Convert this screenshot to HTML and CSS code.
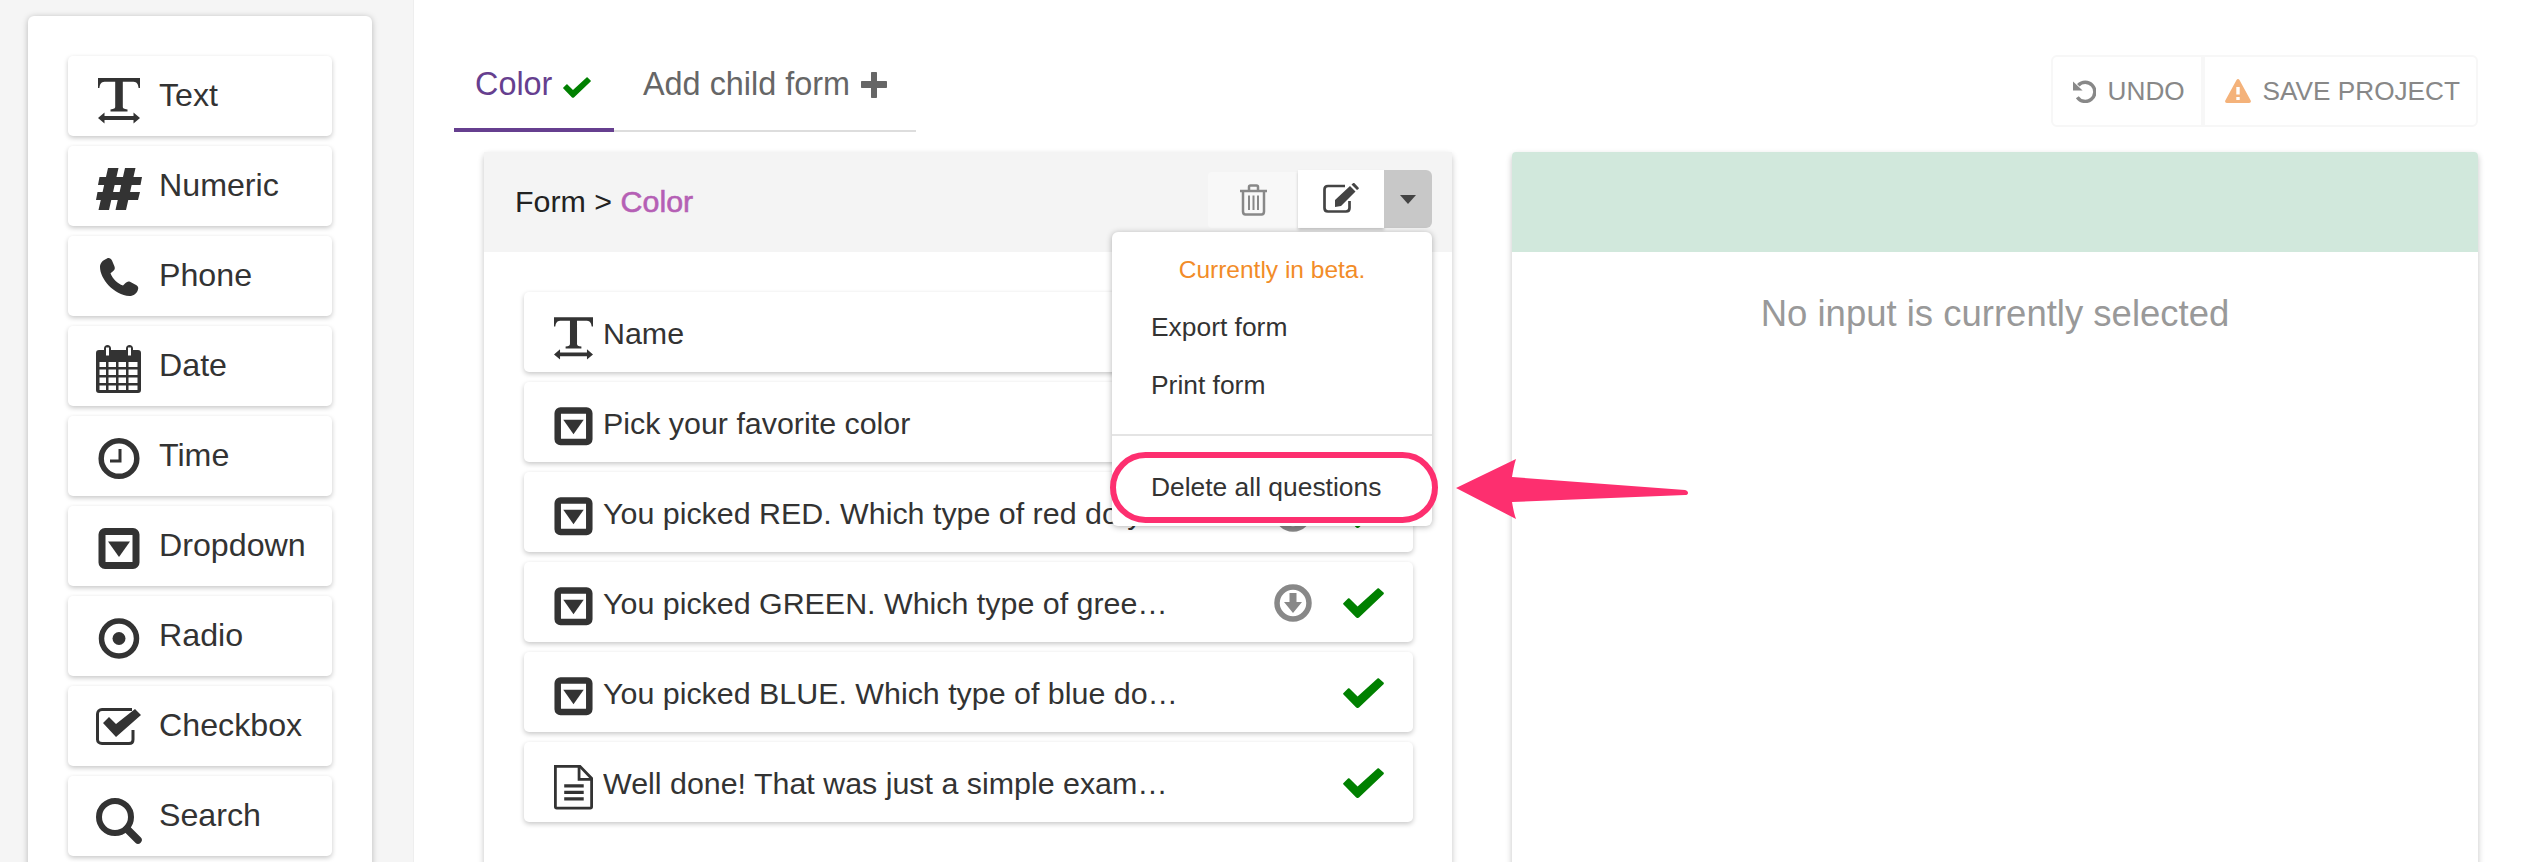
FILE: index.html
```html
<!DOCTYPE html>
<html lang="en">
<head>
    <meta charset="UTF-8">
    <title>Form builder</title>
    <link rel="stylesheet" href="styles.css">
</head>
<body>
    <svg class="sprite" xmlns="http://www.w3.org/2000/svg">
        <symbol id="i-text" viewBox="0 0 46 56">
            <path d="M2 10H44V20H42.6C42 16 41 14.2 37.500 13.800H26.800V38.500C26.800 40.500 28 41 31.500 41.500V43.500H14.500V41.500C18 41 19.200 40.500 19.200 38.500V13.800H8.500C5 14.200 4 16 3.400 20H2Z"/>
            <path d="M2 50L8.500 44.500V48H37.500V44.500L44 50L37.500 55.500V52H8.500V55.500Z"/>
        </symbol>
        <symbol id="i-hash" viewBox="0 0 46 56">
            <path d="M12 10H22.500L13 52H2.500ZM29 10H39.500L30 52H19.500Z"/>
            <path d="M3.500 19H46L44.500 27H2ZM1.500 34H44L42 42H0Z"/>
        </symbol>
        <symbol id="i-phone" viewBox="0 0 46 56">
            <path d="M11 10.500C13 9.500 15 10.500 16 12.500L18.500 18.500C19.300 20.500 18.500 22 17 23.300L14.500 25.200C16.500 30.500 21.500 35.500 27 37.500L29.500 35C31 33.500 32.500 33 34 33.800L40.500 37.200C42.300 38.200 42.500 40 42 41.500C41 45.500 37.500 48 33.500 48C18 47 4 31 4 19C4 15 7 12 11 10.500Z"/>
        </symbol>
        <symbol id="i-calendar" viewBox="0 0 46 56">
            <path fill-rule="evenodd" d="M3 12H8V10.500C8 8.500 9.500 7 11.500 7S15 8.500 15 10.500V12H30V10.500C30 8.500 31.500 7 33.500 7S37 8.500 37 10.500V12H42C44 12 45 13 45 15V52C45 54 44 55 42 55H3C1 55 0 54 0 52V15C0 13 1 12 3 12ZM10 9.500V17.500H13V9.500ZM32 9.500V17.500H35V9.500ZM3.500 24V29H10V24ZM12.500 24V29H20V24ZM22.500 24V29H30V24ZM32.500 24V29H41.500V24ZM3.500 31.500V37H10V31.500ZM12.500 31.500V37H20V31.500ZM22.500 31.500V37H30V31.500ZM32.500 31.500V37H41.500V31.500ZM3.500 39.500V45H10V39.500ZM12.500 39.500V45H20V39.500ZM22.500 39.500V45H30V39.500ZM32.500 39.500V45H41.500V39.500ZM3.500 47.500V52H10V47.500ZM12.500 47.500V52H20V47.500ZM22.500 47.500V52H30V47.500ZM32.500 47.500V52H41.500V47.500Z"/>
        </symbol>
        <symbol id="i-clock" viewBox="0 0 46 56">
            <circle cx="23" cy="30.500" r="17.800" fill="none" stroke="currentColor" stroke-width="5.500"/>
            <path d="M24 21V33H14" fill="none" stroke="currentColor" stroke-width="3"/>
        </symbol>
        <symbol id="i-dropdown" viewBox="0 0 46 56">
            <rect x="6" y="13.500" width="34" height="34" rx="3" fill="none" stroke="currentColor" stroke-width="7"/>
            <path d="M12 23.500H34L23 39Z"/>
        </symbol>
        <symbol id="i-radio" viewBox="0 0 46 56">
            <circle cx="23" cy="30.500" r="17.500" fill="none" stroke="currentColor" stroke-width="5.500"/>
            <circle cx="23" cy="30.500" r="6.500"/>
        </symbol>
        <symbol id="i-checkbox" viewBox="0 0 46 56">
            <path d="M36 11.500H6C3.500 11.500 1.500 13.500 1.500 16V41.500C1.500 44 3.500 45.500 6 45.500H33C35.500 45.500 37 44 37 41.500V32" fill="none" stroke="currentColor" stroke-width="3"/>
            <path d="M7 25L13 19L20 26L39 11L45 17L20 39Z"/>
        </symbol>
        <symbol id="i-search" viewBox="0 0 46 56">
            <circle cx="19" cy="29" r="16" fill="none" stroke="currentColor" stroke-width="6"/>
            <path d="M31 41L42 52" fill="none" stroke="currentColor" stroke-width="7.500" stroke-linecap="round"/>
        </symbol>
        <symbol id="i-file" viewBox="0 0 46 56">
            <path d="M3.500 9H30L42.500 22V52.500C42.500 53.500 42 54 41 54H5C4 54 3.500 53.500 3.500 52.500Z" fill="none" stroke="currentColor" stroke-width="3"/>
            <path d="M29 9V23H43" fill="none" stroke="currentColor" stroke-width="3"/>
            <path d="M13 30H34M13 37H34M13 44H34" fill="none" stroke="currentColor" stroke-width="3.500"/>
        </symbol>
        <symbol id="i-check" viewBox="0 0 41 30">
            <path d="M0.500 16.500C0 16 0 15.400 0.500 15L5 10.600C5.500 10 6 10 6.500 10.600L14.600 18.600L34.500 0.500C35 0 35.500 0 36 0.500L40.500 4.600C41 5 41 5.600 40.500 6.200L16 29.500C15.300 30.200 14 30.200 13.200 29.500Z"/>
        </symbol>
        <symbol id="i-plus" viewBox="0 0 26 26">
            <path d="M10 1C10 .4 10.400 0 11 0H15C15.600 0 16 .4 16 1V9H25C25.600 9 26 9.400 26 10V15C26 15.600 25.600 16 25 16H16V25C16 25.600 15.600 26 15 26H11C10.400 26 10 25.600 10 25V16H1C.4 16 0 15.600 0 15V10C0 9.400 .4 9 1 9H10Z"/>
        </symbol>
        <symbol id="i-down" viewBox="0 0 38 38">
            <circle cx="19" cy="19" r="16" fill="none" stroke="currentColor" stroke-width="5.500"/>
            <path d="M15.500 9H22.500V18H28L19 29L10 18H15.500Z"/>
        </symbol>
        <symbol id="i-trash" viewBox="0 0 29 32">
            <path d="M1 7H28M10 7V3C10 2 10.800 1.500 11.500 1.500H17.500C18.200 1.500 19 2 19 3V7M4 7V27.500C4 29.500 5 30.500 6.500 30.500H22.500C24 30.500 25 29.500 25 27.500V7" fill="none" stroke="currentColor" stroke-width="2.500"/>
            <path d="M10 11.500V26M14.500 11.500V26M19 11.500V26" fill="none" stroke="currentColor" stroke-width="2"/>
        </symbol>
        <symbol id="i-edit" viewBox="0 0 36 30">
            <path d="M22 3H5C2.800 3 1.500 4.300 1.500 6.500V25C1.500 27.200 2.800 28.500 5 28.500H23C25.200 28.500 26.500 27.200 26.500 25V18" fill="none" stroke="currentColor" stroke-width="2.700"/>
            <path d="M12 17L27 3L32.500 8.500L18 23L12 24ZM28.500 1.500L30 .3C30.500 0 31 0 31.500 .3L35.500 4.500C36 5 36 5.500 35.500 6L34 7Z"/>
        </symbol>
        <symbol id="i-undo" viewBox="0 0 24 24">
            <path d="M5.500 5.500A10 10 0 1 1 4.500 18" fill="none" stroke="currentColor" stroke-width="3.600"/>
            <path d="M0 1.500L10 11H0Z"/>
        </symbol>
        <symbol id="i-warn" viewBox="0 0 26 24">
            <path fill-rule="evenodd" d="M11.500 1C12.300 -.2 13.700 -.2 14.500 1L25.700 21.500C26.300 22.800 25.500 24 24.200 24H1.800C.5 24 -.3 22.800 .3 21.500ZM11.300 8V15.500H14.700V8ZM11.300 18V21H14.700V18Z"/>
        </symbol>
    </svg>

    <div class="app">
        <aside class="sidebar">
            <div class="tool-card">
                <div class="tool"><svg class="tool-icon"><use href="#i-text"/></svg><span>Text</span></div>
                <div class="tool"><svg class="tool-icon"><use href="#i-hash"/></svg><span>Numeric</span></div>
                <div class="tool"><svg class="tool-icon"><use href="#i-phone"/></svg><span>Phone</span></div>
                <div class="tool"><svg class="tool-icon"><use href="#i-calendar"/></svg><span>Date</span></div>
                <div class="tool"><svg class="tool-icon"><use href="#i-clock"/></svg><span>Time</span></div>
                <div class="tool"><svg class="tool-icon"><use href="#i-dropdown"/></svg><span>Dropdown</span></div>
                <div class="tool"><svg class="tool-icon"><use href="#i-radio"/></svg><span>Radio</span></div>
                <div class="tool"><svg class="tool-icon"><use href="#i-checkbox"/></svg><span>Checkbox</span></div>
                <div class="tool"><svg class="tool-icon"><use href="#i-search"/></svg><span>Search</span></div>
            </div>
        </aside>

        <main class="content">
            <div class="topbar">
                <div class="tabs">
                    <div class="tab tab-active">Color <svg class="tab-check"><use href="#i-check"/></svg></div>
                    <div class="tab tab-add">Add child form <svg class="tab-plus"><use href="#i-plus"/></svg></div>
                </div>
                <div class="actions">
                    <div class="action action-undo"><svg class="undo-icon"><use href="#i-undo"/></svg>UNDO</div>
                    <div class="action action-save"><svg class="warn-icon"><use href="#i-warn"/></svg>SAVE PROJECT</div>
                </div>
            </div>

            <div class="panels">
                <section class="panel panel-form">
                    <div class="form-head">
                        <div class="crumb">Form &gt; <span class="crumb-name">Color</span></div>
                        <div class="head-buttons">
                            <div class="btn-trash"><svg class="trash-icon"><use href="#i-trash"/></svg></div>
                            <div class="btn-edit"><svg class="edit-icon"><use href="#i-edit"/></svg></div>
                            <div class="btn-caret"><span class="caret"></span></div>
                        </div>
                        <div class="menu">
                            <div class="menu-note">Currently in beta.</div>
                            <div class="menu-item">Export form</div>
                            <div class="menu-item">Print form</div>
                            <div class="menu-line"></div>
                            <div class="menu-item">Delete all questions</div>
                        </div>
                    </div>
                    <div class="rows">
                        <div class="row">
                            <svg class="row-icon"><use href="#i-text"/></svg>
                            <span class="row-label">Name</span>
                            <div class="row-status"><svg class="ok-icon"><use href="#i-check"/></svg></div>
                        </div>
                        <div class="row">
                            <svg class="row-icon"><use href="#i-dropdown"/></svg>
                            <span class="row-label">Pick your favorite color</span>
                            <div class="row-status"><svg class="down-icon"><use href="#i-down"/></svg><svg class="ok-icon"><use href="#i-check"/></svg></div>
                        </div>
                        <div class="row">
                            <svg class="row-icon"><use href="#i-dropdown"/></svg>
                            <span class="row-label">You picked RED. Which type of red do you like best?</span>
                            <div class="row-status"><svg class="down-icon"><use href="#i-down"/></svg><svg class="ok-icon"><use href="#i-check"/></svg></div>
                        </div>
                        <div class="row">
                            <svg class="row-icon"><use href="#i-dropdown"/></svg>
                            <span class="row-label">You picked GREEN. Which type of green do you like best?</span>
                            <div class="row-status"><svg class="down-icon"><use href="#i-down"/></svg><svg class="ok-icon"><use href="#i-check"/></svg></div>
                        </div>
                        <div class="row">
                            <svg class="row-icon"><use href="#i-dropdown"/></svg>
                            <span class="row-label">You picked BLUE. Which type of blue do you like best?</span>
                            <div class="row-status"><svg class="ok-icon"><use href="#i-check"/></svg></div>
                        </div>
                        <div class="row">
                            <svg class="row-icon"><use href="#i-file"/></svg>
                            <span class="row-label">Well done! That was just a simple example of a form.</span>
                            <div class="row-status"><svg class="ok-icon"><use href="#i-check"/></svg></div>
                        </div>
                    </div>
                </section>

                <section class="panel panel-detail">
                    <div class="detail-head"></div>
                    <p class="detail-empty">No input is currently selected</p>
                </section>
            </div>
        </main>
    </div>

    <!-- screenshot annotation -->
    <div class="mark-ring"></div>
    <svg class="mark-arrow" viewBox="0 0 240 70">
        <path d="M6 38L66 9C64 15 63 21 62 27L235 40C239 41 239 45 235 45L62 52C63 58 64 63 66 69Z"/>
    </svg>
</body>
</html>
```

FILE: styles.css
```css
* {
    box-sizing: border-box;
}

html, body {
    height: 100%;
}

body {
    margin: 0;
    overflow: hidden;
    background-color: #fff;
    color: #333;
    font-family: "Liberation Sans", Arial, sans-serif;
}

svg {
    fill: currentColor;
}

.sprite {
    display: none;
}

.app {
    display: flex;
    height: 862px;
}

/* left toolbox */
.sidebar {
    flex: none;
    width: 414px;
    height: 100%;
    overflow: hidden;
    padding: 16px 0 0 28px;
    background-color: #f5f5f5;
    border-right: 1px solid #eee;
}

.tool-card {
    display: flex;
    flex-direction: column;
    gap: 10px;
    width: 344px;
    height: 900px;
    padding: 40px;
    background-color: #fff;
    border-radius: 6px;
    box-shadow: 0 1px 6px rgba(0, 0, 0, 0.25);
}

.tool {
    display: flex;
    flex: none;
    align-items: center;
    height: 80px;
    padding-left: 28px;
    background-color: #fff;
    border-radius: 5px;
    box-shadow: 0 2px 5px rgba(0, 0, 0, 0.22);
    font-size: 32.2px;
}

.tool span {
    margin-left: 17px;
    margin-top: -2px;
}

.tool-icon {
    flex: none;
    width: 46px;
    height: 56px;
}

/* main column */
.content {
    flex: none;
    width: 2134px;
    padding-left: 40px;
}

.topbar {
    display: flex;
    justify-content: space-between;
    height: 152px;
    padding-right: 70px;
}

.tabs {
    display: flex;
    width: 462px;
    height: 132px;
    border-bottom: 2px solid #ddd;
}

.tab {
    display: flex;
    align-items: flex-end;
    gap: 11px;
    height: 132px;
    margin-bottom: -2px;
    padding: 0 21px 32px;
    color: #666;
    font-size: 32.4px;
    line-height: 32px;
}

.tab-active {
    width: 160px;
    padding-bottom: 28px;
    color: #663f8f;
    border-bottom: 4px solid #663f8f;
}

.tab-add {
    padding-left: 29px;
}

.tab-check {
    flex: none;
    width: 28px;
    height: 21px;
    margin-bottom: 2px;
    color: #008000;
}

.tab-plus {
    flex: none;
    width: 26px;
    height: 26px;
    margin: 0 0 2px 0;
    color: #666;
}

.actions {
    display: flex;
    height: 72px;
    margin-top: 55px;
    border: 2px solid #f7f7f7;
    border-radius: 6px;
    color: #888;
    font-size: 26.2px;
}

.action {
    display: flex;
    align-items: center;
}

.action-undo {
    gap: 12px;
    width: 152px;
    padding-left: 20px;
    border-right: 4px solid #f7f7f7;
}

.action-save {
    gap: 12px;
    padding: 0 16px 0 20px;
}

.undo-icon {
    width: 23px;
    height: 23px;
    color: #888;
}

.warn-icon {
    width: 26px;
    height: 24px;
    color: #f4b27a;
}

.panels {
    display: flex;
    gap: 60px;
    margin-left: 30px;
}

.panel {
    height: 800px;
    background-color: #fff;
    border-radius: 4px 4px 0 0;
    box-shadow: 0 3px 6px rgba(0, 0, 0, 0.24);
}

.panel-form {
    width: 968px;
}

.panel-detail {
    width: 966px;
}

/* form panel */
.form-head {
    position: relative;
    display: flex;
    align-items: center;
    justify-content: space-between;
    height: 100px;
    padding: 0 20px 0 31px;
    background-color: #f4f4f4;
}

.crumb {
    margin-top: -2px;
    color: #222;
    font-size: 30.4px;
}

.crumb-name {
    color: #b55fb5;
    -webkit-text-stroke: 0.6px #b55fb5;
}

.head-buttons {
    display: flex;
    align-items: flex-end;
    height: 58px;
    margin-bottom: 6px;
}

.btn-trash {
    display: flex;
    align-items: center;
    justify-content: center;
    width: 90px;
    height: 56px;
    background-color: #f8f8f8;
    border-radius: 4px 0 0 4px;
}

.trash-icon {
    width: 29px;
    height: 32px;
    color: #888;
}

.btn-edit {
    display: flex;
    align-items: center;
    justify-content: center;
    width: 86px;
    height: 58px;
    background-color: #fff;
    box-shadow: 0 2px 3px rgba(0, 0, 0, 0.2);
}

.edit-icon {
    width: 36px;
    height: 30px;
    margin-bottom: 3px;
    color: #444;
}

.btn-caret {
    display: flex;
    align-items: center;
    justify-content: center;
    width: 48px;
    height: 58px;
    background-color: #c8c8c8;
    border-radius: 0 6px 6px 0;
}

.caret {
    width: 0;
    height: 0;
    border-top: 9px solid #444;
    border-left: 8px solid transparent;
    border-right: 8px solid transparent;
}

.menu {
    position: absolute;
    z-index: 5;
    top: 80px;
    right: 20px;
    width: 320px;
    padding: 20px 0 10px;
    background-color: #fff;
    border-radius: 6px;
    box-shadow: 0 1px 6px rgba(0, 0, 0, 0.3);
    font-size: 26.4px;
}

.menu-note {
    height: 36px;
    margin-bottom: 10px;
    color: #f28c28;
    font-size: 24.5px;
    line-height: 36px;
    text-align: center;
}

.menu-item {
    height: 58px;
    padding-left: 39px;
    line-height: 58px;
}

.menu-line {
    height: 2px;
    margin: 20px 0 22px;
    background-color: #e4e4e4;
}

.rows {
    display: flex;
    flex-direction: column;
    gap: 10px;
    padding: 40px 39px 0 40px;
}

.row {
    display: flex;
    flex: none;
    align-items: center;
    height: 80px;
    padding-left: 28px;
    background-color: #fff;
    border-radius: 5px;
    box-shadow: 0 2px 5px rgba(0, 0, 0, 0.22);
    font-size: 30.4px;
}

.row-icon {
    flex: none;
    width: 43px;
    height: 52px;
    margin-top: 4px;
}

.row-label {
    flex: none;
    width: 576px;
    margin: 2px 0 0 8px;
    overflow: hidden;
    white-space: nowrap;
    text-overflow: ellipsis;
}

.row-status {
    display: flex;
    align-items: center;
    justify-content: flex-end;
    gap: 31px;
    margin: 2px 0 0 auto;
    padding-right: 29px;
}

.down-icon {
    width: 38px;
    height: 38px;
    color: #888;
}

.ok-icon {
    width: 41px;
    height: 30px;
    color: #008000;
}

/* detail panel */
.detail-head {
    height: 100px;
    background-color: #d1e8dc;
    border-radius: 4px 4px 0 0;
}

.detail-empty {
    margin: 41px 0 0;
    color: #999;
    font-size: 36.5px;
    line-height: 42px;
    text-align: center;
}

/* annotation over the page */
.mark-ring {
    position: absolute;
    z-index: 10;
    left: 1110px;
    top: 452px;
    width: 328px;
    height: 71px;
    border: 6px solid #fd2f6f;
    border-radius: 36px;
}

.mark-arrow {
    position: absolute;
    z-index: 10;
    left: 1450px;
    top: 450px;
    width: 240px;
    height: 70px;
    color: #fd2f6f;
}
```
